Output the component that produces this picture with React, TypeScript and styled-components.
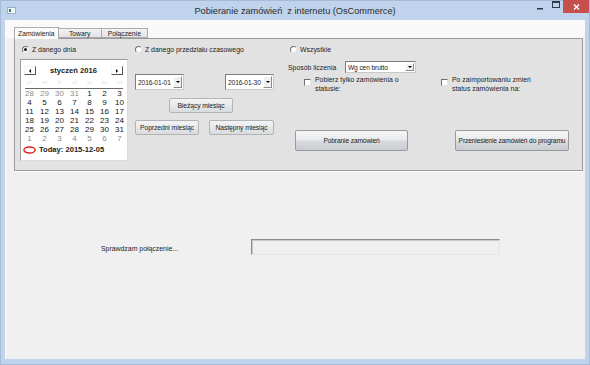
import styled, { createGlobalStyle } from "styled-components"

const GlobalStyle = createGlobalStyle`
  html, body { margin: 0; padding: 0; background: #bfd3ec; }
  body { font-family: "Liberation Sans", Arial, sans-serif; color: #1c1c1c; white-space: nowrap; }
  * { box-sizing: border-box; }
`

const Window = styled.div`
  width: 590px;
  height: 365px;
  background: #bfd3ec;
  border: 1px solid #a5bbd6;
  padding: 0 4px 5px 4px;
  display: flex;
  flex-direction: column;
`

const TitleBar = styled.div`
  height: 19px;
  display: grid;
  grid-template-columns: 1fr auto 1fr;
  align-items: center;
`

const Title = styled.div`
  font-size: 9.2px;
  color: #2b2b2b;
`

const Controls = styled.div`
  justify-self: end;
  align-self: start;
  margin-top: -1px;
  display: flex;
  align-items: flex-start;
`

const CtrlGlyph = styled.div<{ w: number }>`
  width: ${p => p.w}px;
  height: 13px;
  display: flex;
  align-items: center;
  justify-content: center;
`

const CloseBtn = styled.div`
  width: 26px;
  height: 13px;
  background: #c7504c;
  display: flex;
  align-items: center;
  justify-content: center;
  margin-right: -4px;
`

const Client = styled.div`
  flex: 1;
  background: #f0f0f0;
  border-left: 1px solid #fafafa;
  display: flex;
  flex-direction: column;
`

const TabStrip = styled.div`
  height: 18px;
  background: #f9f9f9;
  padding-left: 8px;
  display: flex;
  align-items: flex-end;
`

const Tab = styled.div<{ active?: boolean }>`
  height: ${p => (p.active ? 12 : 10)}px;
  padding: 0 ${p => (p.active ? 3 : 6)}px;
  margin-bottom: ${p => (p.active ? -1 : 0)}px;
  min-width: 43px;
  font-size: 6.8px;
  display: flex;
  align-items: center;
  justify-content: center;
  border: 1px solid #acacac;
  border-bottom: ${p => (p.active ? "none" : "1px solid #acacac")};
  border-left: ${p => (p.active ? "1px solid #acacac" : "none")};
  background: ${p => (p.active ? "#fbfbfb" : "linear-gradient(#f2f2f2, #e3e3e3)")};
  position: relative;
  z-index: ${p => (p.active ? 2 : 1)};
`

const TabPage = styled.div`
  height: 133px;
  margin: 0 2px 0 8px;
  background: #e2e2e2;
  border: 1px solid #9a9a9a;
  box-shadow: 0 1px 0 #ffffff;
  padding: 5px 0 0 5px;
  display: flex;
`

const Column = styled.div<{ w?: number; ml?: number }>`
  ${p => (p.w ? `width: ${p.w}px;` : "flex: 1;")}
  margin-left: ${p => p.ml ?? 0}px;
  display: flex;
  flex-direction: column;
`

const RadioRow = styled.label<{ indent?: number }>`
  height: 10px;
  padding-left: ${p => p.indent ?? 0}px;
  display: flex;
  align-items: center;
  font-size: 6.9px;
`

const RadioDot = styled.span<{ checked?: boolean }>`
  width: 7px;
  height: 7px;
  border-radius: 50%;
  margin-right: 3px;
  background: #fff;
  border: 1px solid;
  border-color: #6f6f6f #e6e6e6 #e6e6e6 #6f6f6f;
  display: flex;
  align-items: center;
  justify-content: center;
  &::after {
    content: "";
    width: 3px;
    height: 3px;
    border-radius: 50%;
    background: ${p => (p.checked ? "#111" : "transparent")};
  }
`

/* calendar */

const Calendar = styled.div`
  margin-top: 5px;
  width: 108px;
  height: 102px;
  background: #fff;
  border: 1px solid;
  border-color: #9d9d9d #dcdcdc #dcdcdc #9d9d9d;
  padding: 5px 1px 0 1px;
  display: flex;
  flex-direction: column;
`

const CalHeader = styled.div`
  height: 11px;
  padding: 0 3px 0 2px;
  display: flex;
  align-items: center;
  justify-content: space-between;
`

const NavBtn = styled.div`
  width: 12px;
  height: 9px;
  background: #fff;
  border: 1px solid;
  border-color: #f4f4f4 #555 #555 #f4f4f4;
  display: flex;
  align-items: center;
  justify-content: center;
`

const MonthTitle = styled.div`
  font-size: 7.6px;
  font-weight: bold;
`

const DayNames = styled.div`
  height: 11px;
  display: grid;
  grid-template-columns: repeat(7, 15px);
  align-items: center;
  font-size: 5.5px;
  color: #e4e4e4;
  text-align: center;
`

const Separator = styled.div`
  height: 1px;
  margin: 1px 3px 0 3px;
  background: #6a6a6a;
`

const DayGrid = styled.div`
  display: grid;
  grid-template-columns: repeat(7, 15px);
  grid-auto-rows: 9px;
  font-size: 8px;
  line-height: 9px;
  text-align: center;
`

const Day = styled.div<{ muted?: boolean }>`
  color: ${p => (p.muted ? "#8c8c8c" : "#151515")};
`

const TodayRow = styled.div`
  height: 13px;
  padding-left: 1px;
  display: flex;
  align-items: center;
  gap: 3px;
  font-size: 7.6px;
  font-weight: bold;
`

/* middle column */

const DateRow = styled.div`
  margin-top: 20px;
  display: flex;
  justify-content: space-between;
`

const Picker = styled.div<{ w: number; h: number }>`
  width: ${p => p.w}px;
  height: ${p => p.h}px;
  background: #fff;
  border: 1px solid;
  border-color: #7d7d7d #c9c9c9 #c9c9c9 #7d7d7d;
  padding: 1px 1px 1px 2px;
  display: flex;
  align-items: center;
  justify-content: space-between;
  font-size: 6.6px;
  letter-spacing: -0.1px;
`

const DropBtn = styled.div`
  width: 9px;
  height: 100%;
  flex-shrink: 0;
  background: #f0f0f0;
  border: 1px solid;
  border-color: #fff #8a8a8a #8a8a8a #fff;
  display: flex;
  align-items: center;
  justify-content: center;
`

const SmallButton = styled.div<{ w: number }>`
  width: ${p => p.w}px;
  height: 15px;
  border: 1px solid #b3b3b3;
  border-radius: 2px;
  background: linear-gradient(#f3f4f5, #e6e8ea 50%, #d9dcdf);
  font-size: 6.8px;
  letter-spacing: -0.1px;
  display: flex;
  align-items: center;
  justify-content: center;
`

const CenterBtnRow = styled.div`
  margin: 8px 0 0 34px;
`

const NavBtnRow = styled.div`
  margin-top: 7px;
  display: flex;
  gap: 10px;
`

/* right column */

const FieldRow = styled.div`
  margin-top: 7px;
  display: flex;
  align-items: center;
  font-size: 6.9px;
`

const FieldLabel = styled.div`
  width: 57px;
`

const CheckRow = styled.div`
  margin-top: 2px;
  display: flex;
`

const CheckItem = styled.div<{ w: number; ml: number }>`
  width: ${p => p.w}px;
  margin-left: ${p => p.ml}px;
  display: flex;
  align-items: flex-start;
`

const CheckBox = styled.span`
  width: 7px;
  height: 7px;
  margin: 4px 4px 0 0;
  flex-shrink: 0;
  background: #fff;
  border: 1px solid;
  border-color: #6f6f6f #e6e6e6 #e6e6e6 #6f6f6f;
`

const CheckText = styled.div`
  font-size: 6.9px;
  line-height: 9px;
`

const ActionRow = styled.div`
  margin-top: 37px;
  padding-left: 7px;
  display: flex;
  gap: 47px;
`

const BigButton = styled.div<{ w: number }>`
  width: ${p => p.w}px;
  height: 21px;
  border: 1px solid #9a9a9a;
  border-radius: 2px;
  background: linear-gradient(#f5f6f7, #e8eaec 45%, #d6d9dd 55%, #c9cdd2);
  font-size: 6.7px;
  letter-spacing: -0.15px;
  display: flex;
  align-items: center;
  justify-content: center;
`

/* status */

const StatusRow = styled.div`
  margin-top: 68px;
  padding-left: 95px;
  display: flex;
  align-items: center;
  font-size: 6.9px;
`

const StatusLabel = styled.div`
  width: 150px;
  padding-top: 2px;
`

const StatusField = styled.div`
  width: 249px;
  height: 16px;
  background: #efefef;
  border: 1px solid;
  border-color: #8a8a8a #e6e6e6 #e6e6e6 #8a8a8a;
  box-shadow: inset 1px 1px 0 #c8c8c8;
`

const Arrow = ({ dir }: { dir: "left" | "right" | "down" }) => {
  const pts = dir === "left" ? "3,0 3,4 1,2" : dir === "right" ? "1,0 1,4 3,2" : "0,1 4,1 2,3"
  return (
    <svg width="4" height="4" viewBox="0 0 4 4">
      <polygon points={pts} fill="#000" />
    </svg>
  )
}

const weeks = [
  [28, 29, 30, 31, 1, 2, 3],
  [4, 5, 6, 7, 8, 9, 10],
  [11, 12, 13, 14, 15, 16, 17],
  [18, 19, 20, 21, 22, 23, 24],
  [25, 26, 27, 28, 29, 30, 31],
  [1, 2, 3, 4, 5, 6, 7],
]

const App = () => {
  return (
    <>
      <GlobalStyle />
      <Window>
        <TitleBar>
          <svg width="9" height="7" viewBox="0 0 9 7" style={{ marginLeft: 2 }}>
            <rect x="0.5" y="0.5" width="8" height="6" fill="#f4f8fb" stroke="#9bb0c6" />
            <rect x="2" y="2" width="2" height="3" fill="#2f8a4c" />
          </svg>
          <Title>Pobieranie zamówień&nbsp; z internetu (OsCommerce)</Title>
          <Controls>
            <CtrlGlyph w={18}>
              <svg width="6" height="6" viewBox="0 0 6 6">
                <rect x="0" y="4" width="6" height="1.5" fill="#2f3a48" />
              </svg>
            </CtrlGlyph>
            <CtrlGlyph w={14}>
              <svg width="8" height="7" viewBox="0 0 8 7" style={{ marginTop: -4 }}>
                <rect x="0.5" y="0.5" width="7" height="6" fill="none" stroke="#2f3a48" />
                <rect x="0.5" y="0.5" width="7" height="1.5" fill="#2f3a48" />
              </svg>
            </CtrlGlyph>
            <CloseBtn>
              <svg width="7" height="6" viewBox="0 0 7 6">
                <path d="M1 0.5 L6 5.5 M6 0.5 L1 5.5" stroke="#fff" strokeWidth="1.4" />
              </svg>
            </CloseBtn>
          </Controls>
        </TitleBar>
        <Client>
          <TabStrip>
            <Tab active>Zamówienia</Tab>
            <Tab>Towary</Tab>
            <Tab>Połączenie</Tab>
          </TabStrip>
          <TabPage>
            <Column w={108}>
              <RadioRow indent={2}>
                <RadioDot checked />Z danego dnia
              </RadioRow>
              <Calendar>
                <CalHeader>
                  <NavBtn><Arrow dir="left" /></NavBtn>
                  <MonthTitle>styczeń 2016</MonthTitle>
                  <NavBtn><Arrow dir="right" /></NavBtn>
                </CalHeader>
                <DayNames>
                  {["pn", "wt", "śr", "cz", "pt", "so", "nd"].map(d => (
                    <div key={d}>{d}</div>
                  ))}
                </DayNames>
                <Separator />
                <DayGrid>
                  {weeks.map((w, wi) =>
                    w.map((d, di) => (
                      <Day key={`${wi}-${di}`} muted={(wi === 0 && d > 20) || wi === 5}>
                        {d}
                      </Day>
                    ))
                  )}
                </DayGrid>
                <TodayRow>
                  <svg width="13" height="8" viewBox="0 0 13 8">
                    <ellipse cx="6.5" cy="4" rx="5.6" ry="3" fill="none" stroke="#e0201c" strokeWidth="1.4" />
                  </svg>
                  Today: 2015-12-05
                </TodayRow>
              </Calendar>
            </Column>
            <Column w={139} ml={7}>
              <RadioRow>
                <RadioDot />Z danego przedziału czasowego
              </RadioRow>
              <DateRow>
                <Picker w={49} h={16}>
                  2016-01-01
                  <DropBtn><Arrow dir="down" /></DropBtn>
                </Picker>
                <Picker w={49} h={16}>
                  2016-01-30
                  <DropBtn><Arrow dir="down" /></DropBtn>
                </Picker>
              </DateRow>
              <CenterBtnRow>
                <SmallButton w={64}>Bieżący miesiąc</SmallButton>
              </CenterBtnRow>
              <NavBtnRow>
                <SmallButton w={64}>Poprzedni miesiąc</SmallButton>
                <SmallButton w={65}>Następny miesiąc</SmallButton>
              </NavBtnRow>
            </Column>
            <Column ml={14}>
              <RadioRow indent={2}>
                <RadioDot />Wszystkie
              </RadioRow>
              <FieldRow>
                <FieldLabel>Sposób liczenia</FieldLabel>
                <Picker w={71} h={12}>
                  Wg cen brutto
                  <DropBtn><Arrow dir="down" /></DropBtn>
                </Picker>
              </FieldRow>
              <CheckRow>
                <CheckItem w={137} ml={16}>
                  <CheckBox />
                  <CheckText>Pobierz tylko zamówienia o<br />statusie:</CheckText>
                </CheckItem>
                <CheckItem w={130} ml={0}>
                  <CheckBox />
                  <CheckText>Po zaimportowaniu zmień<br />status zamówienia na:</CheckText>
                </CheckItem>
              </CheckRow>
              <ActionRow>
                <BigButton w={113}>Pobranie zamówień</BigButton>
                <BigButton w={114}>Przeniesienie zamówień do programu</BigButton>
              </ActionRow>
            </Column>
          </TabPage>
          <StatusRow>
            <StatusLabel>Sprawdzam połączenie...</StatusLabel>
            <StatusField />
          </StatusRow>
        </Client>
      </Window>
    </>
  )
}

export default App
